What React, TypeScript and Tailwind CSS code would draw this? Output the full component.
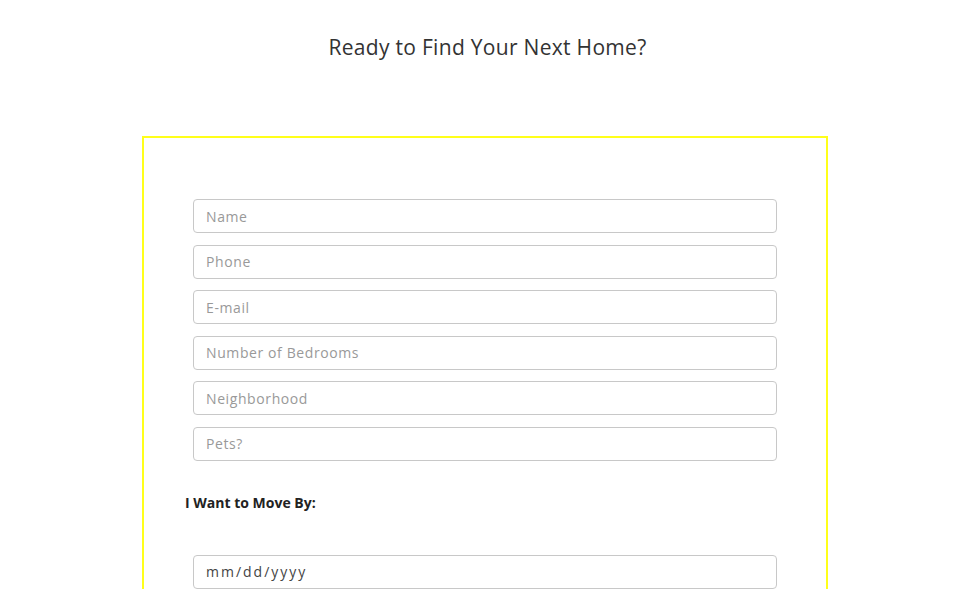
const fields = ["Name", "Phone", "E-mail", "Number of Bedrooms", "Neighborhood", "Pets?"];

const App = () => {
  return (
    <div className="min-h-screen bg-white font-['Open_Sans',sans-serif] text-[#333]">
      <h2 className="pt-[34px] text-center text-[21px] leading-[26px] tracking-[0.3px] text-[#333]">
        Ready to Find Your Next Home?
      </h2>

      <form className="mt-[76px] ml-[142px] w-[686px] border-2 border-[#ffff1a] px-[41px] pt-[61px] pb-10">
        <div className="mx-2 flex flex-col gap-[11.6px]">
          {fields.map(f => (
            <input
              key={f}
              placeholder={f}
              className="h-[34px] w-full rounded-[4px] border border-[#c8c8c8] px-3 text-[14px] tracking-[0.6px] text-[#555] placeholder:text-[#999] focus:outline-none"
            />
          ))}
        </div>

        <label className="mt-[32px] block text-[14px] font-bold leading-5 text-[#222]">
          I Want to Move By:
        </label>

        <div className="mx-2 mt-[42px] flex h-[34px] items-center rounded-[4px] border border-[#c8c8c8] px-3 text-[14px] tracking-[2px] text-[#444]">
          mm/dd/yyyy
        </div>
      </form>
    </div>
  );
};

export default App;
